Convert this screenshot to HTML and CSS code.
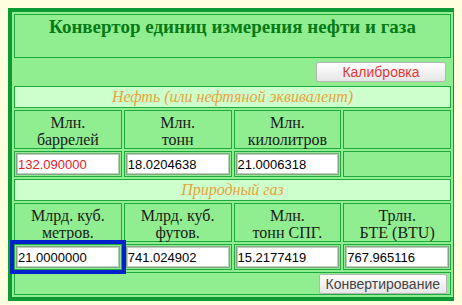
FILE: index.html
```html
<!DOCTYPE html>
<html lang="ru">

<head>
    <meta charset="UTF-8">
    <meta name="viewport" content="width=device-width, initial-scale=1.0">
    <title>Конвертор единиц измерения нефти и газа</title>
    <link rel="stylesheet" href="styles.css">
</head>

<body>
    <table class="conv">
        <tr>
            <td colspan="4" class="title">Конвертор единиц измерения нефти и газа</td>
        </tr>
        <tr>
            <td colspan="4" class="tools"><button class="btn calib">Калибровка</button></td>
        </tr>
        <tr>
            <td colspan="4" class="section">Нефть (или нефтяной эквивалент)</td>
        </tr>
        <tr class="head">
            <td>Млн.<br>баррелей</td>
            <td>Млн.<br>тонн</td>
            <td>Млн.<br>килолитров</td>
            <td></td>
        </tr>
        <tr class="inputs">
            <td><input class="red" type="text" value="132.090000"></td>
            <td><input type="text" value="18.0204638"></td>
            <td><input type="text" value="21.0006318"></td>
            <td></td>
        </tr>
        <tr>
            <td colspan="4" class="section">Природный газ</td>
        </tr>
        <tr class="head">
            <td>Млрд. куб.<br>метров.</td>
            <td>Млрд. куб.<br>футов.</td>
            <td>Млн.<br>тонн СПГ.</td>
            <td>Трлн.<br>БТЕ (BTU)</td>
        </tr>
        <tr class="inputs">
            <td><input class="focus" type="text" value="21.0000000"></td>
            <td><input type="text" value="741.024902"></td>
            <td><input type="text" value="15.2177419"></td>
            <td><input type="text" value="767.965116"></td>
        </tr>
        <tr>
            <td colspan="4" class="bottom"><button class="btn">Конвертирование</button></td>
        </tr>
    </table>
</body>

</html>
```

FILE: styles.css
```css
body {
    margin: 8px;
    background: #ffffe0;
}

.conv {
    width: 449px;
    border: 4px solid #0b9a33;
    border-spacing: 2px;
    background: #90ee90;
    font-family: "Liberation Serif", serif;
    table-layout: fixed;
}

.conv td {
    border: 1px solid #1fa83f;
    padding: 0 1px;
    text-align: center;
}

.conv .title {
    padding: 1px 1px 19px;
    line-height: 22px;
    font-size: 19px;
    font-weight: bold;
    color: #067a16;
}

.conv .tools {
    border: none;
    padding: 2px 5px 2px 0;
    text-align: right;
    height: 20px;
}

.conv .section {
    background: #ccffcc;
    color: #e9a23b;
    font-style: italic;
    font-size: 16px;
    line-height: 20px;
}

.head td {
    padding: 3px 1px 0;
    font-size: 16px;
    line-height: 17px;
    color: #1a1a1a;
}

.inputs td {
    padding: 1px;
}

.inputs input {
    display: block;
    width: 100%;
    height: 22px;
    box-sizing: border-box;
    margin: 0;
    padding: 0 1px;
    border: 1px solid #86a286;
    box-shadow: inset 0 0 0 1px #bccfbc;
    font-family: "Liberation Sans", Arial, sans-serif;
    font-size: 13px;
    color: #000;
    background: #fff;
}

.inputs input.red {
    color: #e0202a;
}

.inputs input.focus {
    outline: 4px solid #0022cc;
    outline-offset: 2px;
}

.conv .bottom {
    padding: 1px 3px 0 0;
    text-align: right;
}

.btn {
    height: 20px;
    padding: 0 6px;
    border: 1px solid #b4b4b4;
    border-radius: 2px;
    background: linear-gradient(#ffffff, #e6e6e6);
    font-family: "Liberation Sans", Arial, sans-serif;
    font-size: 14px;
    color: #444;
    vertical-align: top;
}

.btn.calib {
    width: 130px;
    color: #e0383a;
}
```
